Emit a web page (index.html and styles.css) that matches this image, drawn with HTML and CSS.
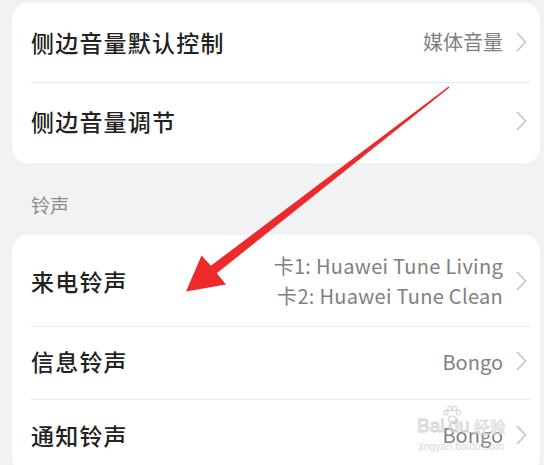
FILE: index.html
```html
<!DOCTYPE html>
<html lang="zh-CN">
<head>
    <meta charset="UTF-8">
    <meta name="viewport" content="width=device-width, initial-scale=1.0">
    <title>声音设置</title>
    <link rel="stylesheet" href="styles.css">
</head>
<body>
    <div class="page">
        <div class="card first">
            <div class="row">
                <div class="row-inner h80">
                    <span class="title">侧边音量默认控制</span>
                    <span class="value">媒体音量</span>
                    <svg class="chev" width="11" height="20" viewBox="0 0 11 20"><path d="M1.5 1.5 L9.5 10 L1.5 18.5" fill="none" stroke="#c4c4c4" stroke-width="1.6" stroke-linecap="round" stroke-linejoin="round"/></svg>
                </div>
            </div>
            <div class="row">
                <div class="row-inner h79 last">
                    <span class="title">侧边音量调节</span>
                    <span class="value"></span>
                    <svg class="chev" width="11" height="20" viewBox="0 0 11 20"><path d="M1.5 1.5 L9.5 10 L1.5 18.5" fill="none" stroke="#c4c4c4" stroke-width="1.6" stroke-linecap="round" stroke-linejoin="round"/></svg>
                </div>
            </div>
        </div>

        <div class="section-label">铃声</div>

        <div class="card">
            <div class="row">
                <div class="row-inner h92">
                    <span class="title">来电铃声</span>
                    <span class="value two-line">卡1: Huawei Tune Living<br>卡2: Huawei Tune Clean</span>
                    <svg class="chev" width="11" height="20" viewBox="0 0 11 20"><path d="M1.5 1.5 L9.5 10 L1.5 18.5" fill="none" stroke="#c4c4c4" stroke-width="1.6" stroke-linecap="round" stroke-linejoin="round"/></svg>
                </div>
            </div>
            <div class="row">
                <div class="row-inner h73">
                    <span class="title">信息铃声</span>
                    <span class="value">Bongo</span>
                    <svg class="chev" width="11" height="20" viewBox="0 0 11 20"><path d="M1.5 1.5 L9.5 10 L1.5 18.5" fill="none" stroke="#c4c4c4" stroke-width="1.6" stroke-linecap="round" stroke-linejoin="round"/></svg>
                </div>
            </div>
            <div class="row">
                <div class="row-inner h73 last">
                    <span class="title">通知铃声</span>
                    <span class="value">Bongo</span>
                    <svg class="chev" width="11" height="20" viewBox="0 0 11 20"><path d="M1.5 1.5 L9.5 10 L1.5 18.5" fill="none" stroke="#c4c4c4" stroke-width="1.6" stroke-linecap="round" stroke-linejoin="round"/></svg>
                </div>
            </div>
        </div>
    </div>

    <!-- red annotation arrow drawn over the screenshot -->
    <svg class="arrow" width="544" height="465" viewBox="0 0 544 465">
        <polygon points="449.6,87.6 216.8,273.2 226,284.5 186,291.5 201.5,255.5 210.8,265.8 448.6,86.4" fill="#ec2a2c"/>
    </svg>

    <div class="watermark">
        <div class="wm-logo">
            <span>Bai</span>
            <svg class="wm-paw" width="20" height="18" viewBox="0 0 26 24">
                <g fill="none" stroke="#d4d4d4" stroke-width="1.4">
                    <ellipse cx="5" cy="10" rx="2.6" ry="3.2"/>
                    <ellipse cx="10" cy="4.5" rx="2.6" ry="3.2"/>
                    <ellipse cx="16.5" cy="4.5" rx="2.6" ry="3.2"/>
                    <ellipse cx="21.5" cy="10" rx="2.6" ry="3.2"/>
                    <path d="M8 20 C8 13 18 13 19 20 C18 23 9 23 8 20 Z"/>
                </g>
            </svg>
            <span>du</span>
            <span class="wm-cn">经验</span>
        </div>
        <div class="wm-url">jingyan.baidu.com</div>
    </div>
</body>
</html>
```

FILE: styles.css
```css
body {
    margin: 0;
    background-color: #f1f2f4;
    font-family: "Noto Sans CJK SC", "Noto Sans", sans-serif;
    width: 544px;
    height: 465px;
    overflow: hidden;
}
.page {
    padding: 3px 4px 0 12px;
}
.card {
    background-color: #fff;
    border-radius: 16px;
}
.row {
    padding-left: 19px;
}
.row-inner {
    display: flex;
    align-items: center;
    margin-right: 10px;
    padding-right: 3px;
    border-bottom: 1px solid #e9e9e9;
    box-sizing: border-box;
}
.row-inner.last {
    border-bottom: none;
}
.h80 { height: 80px; padding-bottom: 2px; }
.h79 { height: 80px; padding-bottom: 5px; }
.h92 { height: 92px; }
.h73 { height: 73px; padding-bottom: 4px; }
.title {
    flex: 1;
    font-size: 23px;
    font-weight: 500;
    color: #222;
    letter-spacing: 1.2px;
}
.value {
    font-size: 20px;
    color: #808080;
    text-align: right;
    margin-right: 13px;
}
.value.two-line {
    line-height: 30px;
    letter-spacing: 0.3px;
}
.chev {
    display: block;
}
.section-label {
    font-size: 19px;
    color: #8c8c8c;
    padding: 28px 0 0 19px;
    height: 44px;
}
.arrow {
    position: absolute;
    left: 0;
    top: 0;
}
.watermark {
    position: absolute;
    left: 417px;
    top: 405px;
    white-space: nowrap;
}
.wm-logo {
    display: flex;
    align-items: flex-end;
    font-family: "Liberation Sans", sans-serif;
    font-size: 19px;
    line-height: 22px;
    color: rgba(255, 255, 255, 0.4);
    -webkit-text-stroke: 1px #d2d2d2;
}
.wm-paw {
    margin-bottom: 14px;
    margin-right: -14px;
    margin-left: -2px;
}
.wm-cn {
    font-family: "Noto Sans CJK SC", sans-serif;
    font-size: 16px;
    margin-left: 4px;
    -webkit-text-stroke: 0.6px #d2d2d2;
}
.wm-url {
    font-family: "Liberation Sans", sans-serif;
    font-size: 10.5px;
    color: #d8d8d8;
    margin-top: 3px;
    margin-left: 2px;
}
```
